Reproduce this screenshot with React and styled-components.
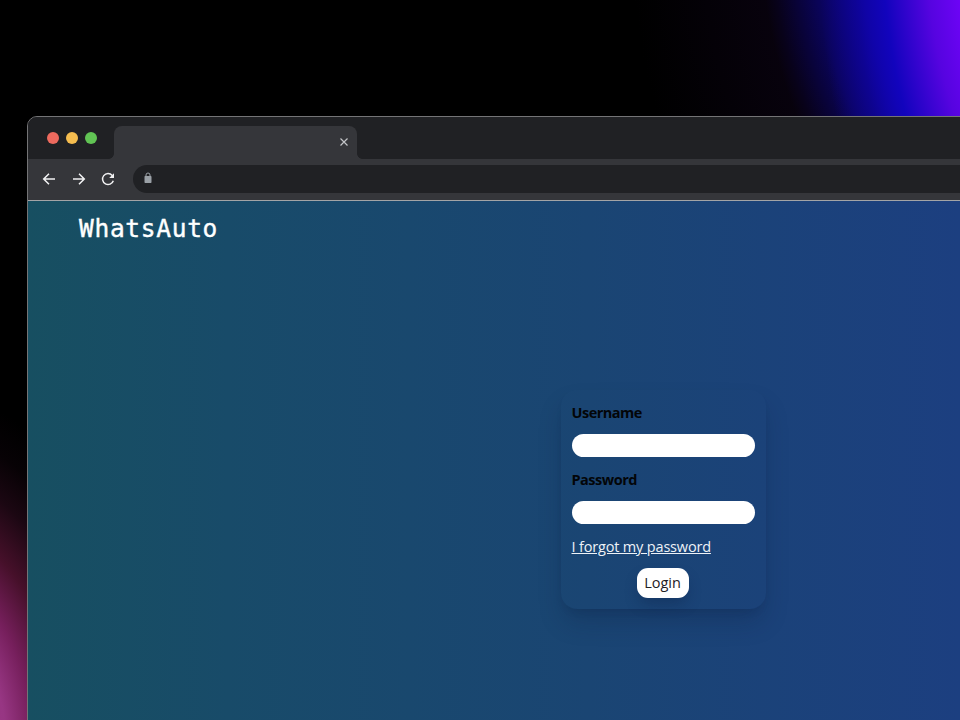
import React from 'react';
import styled, { createGlobalStyle } from 'styled-components';

const GlobalStyle = createGlobalStyle`
  * { box-sizing: border-box; }
  body { margin: 0; background: #000; overflow: hidden; }
`;

const Desktop = styled.div`
  width: 960px;
  height: 720px;
  padding: 116px 0 0 27px;
  overflow: hidden;
  background:
    radial-gradient(ellipse 200px 350px at -60px 745px, #a03a8c 0%, #973683 33%, #761f5c 46%, #46102a 61%, #1b0712 76%, #070205 88%, rgba(0, 0, 0, 0) 100%),
    radial-gradient(ellipse 360px 640px at 1130px -75px, #8a00ff 0%, #7204fa 47%, #5604e0 57%, #1204bd 69%, rgba(18, 4, 189, 0.45) 77%, rgba(18, 4, 189, 0) 87%),
    radial-gradient(ellipse 370px 440px at 1130px -75px, #0c0480 0%, #0c0480 74%, #0a0458 86%, #08021a 97%, rgba(8, 2, 14, 0.9) 100%, rgba(8, 2, 14, 0) 135%),
    #000;
`;

const Browser = styled.div`
  width: 1300px;
  height: 900px;
  display: flex;
  flex-direction: column;
  border: 1.5px solid #747476;
  border-radius: 10px;
  overflow: hidden;
  background: #202124;
`;

const TabStrip = styled.div`
  height: 42px;
  flex: none;
  display: flex;
  align-items: flex-end;
  background: #202124;
`;

const Lights = styled.div`
  display: flex;
  gap: 7px;
  width: 86px;
  padding: 0 0 15px 18.5px;
`;

const Light = styled.span`
  width: 12px;
  height: 12px;
  flex: none;
  border-radius: 50%;
  background: ${(p) => p.$color};
`;

const Tab = styled.div`
  position: relative;
  width: 243px;
  height: 33px;
  padding: 0 8.5px 2px 0;
  display: flex;
  align-items: center;
  justify-content: flex-end;
  border-radius: 8px 8px 0 0;
  background: #35363a;
  &::before,
  &::after {
    content: '';
    position: absolute;
    bottom: 0;
    width: 5px;
    height: 5px;
  }
  &::before {
    left: -5px;
    background: radial-gradient(circle at 0 0, transparent 4.5px, #35363a 5px);
  }
  &::after {
    right: -5px;
    background: radial-gradient(circle at 100% 0, transparent 4.5px, #35363a 5px);
  }
`;

const Toolbar = styled.div`
  height: 42px;
  flex: none;
  display: flex;
  align-items: center;
  padding: 0 0 1px 13px;
  background: #35363a;
  border-bottom: 1px solid #a3a4a6;
`;

const NavIcon = styled.svg`
  width: 16px;
  height: 16px;
  flex: none;
  margin-right: ${(p) => p.$gap}px;
  fill: none;
  stroke: #f1f1f2;
  stroke-width: 1.5;
`;

const CloseIcon = styled.svg`
  width: 10px;
  height: 10px;
  fill: none;
  stroke: #c3c5c8;
  stroke-width: 1.2;
`;

const AddressBar = styled.div`
  flex: 1;
  height: 28px;
  display: flex;
  align-items: center;
  padding: 0 0 2px 9.5px;
  border-radius: 14px 0 0 14px;
  background: #202124;
`;

const LockIcon = styled.svg`
  width: 10px;
  height: 12px;
`;

const Page = styled.main`
  flex: 1;
  background: linear-gradient(90deg, #174f61 0, #184b69 200px, #1a4573 560px, #1c3f80 932px);
`;

const Logo = styled.h1`
  margin: 0;
  padding: 12px 0 0 51px;
  height: 189px;
  color: #fff;
  font: 400 24.5px/32px 'DejaVu Sans Mono', monospace;
  letter-spacing: 0.7px;
  -webkit-text-stroke: 0.4px #fff;
`;

const LoginCard = styled.form`
  width: 205px;
  height: 219px;
  margin-left: 533px;
  padding: 11px 10.5px 0;
  display: flex;
  flex-direction: column;
  border-radius: 16px;
  box-shadow: 0 15px 25px -3px rgba(12, 28, 60, 0.25), 0 5px 10px -5px rgba(12, 28, 60, 0.2);
  font-family: 'Open Sans', 'Noto Sans', sans-serif;
`;

const Label = styled.label`
  height: 33px;
  line-height: 24px;
  color: #030508;
  font-size: 14.5px;
  font-weight: 700;
  letter-spacing: -0.5px;
`;

const Field = styled.input`
  width: 183px;
  height: 23px;
  margin: 0 0 11px;
  padding: 0 10px;
  border: 0;
  border-radius: 12px;
  background: #fff;
`;

const ForgotLink = styled.a`
  height: 33px;
  line-height: 23px;
  align-self: flex-start;
  color: #eef2f7;
  font-size: 14.5px;
  letter-spacing: -0.17px;
  white-space: nowrap;
  text-decoration: underline;
`;

const LoginButton = styled.button`
  width: 52px;
  height: 30px;
  flex: none;
  margin-left: 65px;
  padding: 0;
  border: 0;
  border-radius: 11px;
  background: #fff;
  color: #1f2024;
  font: 400 14.5px/30px 'Open Sans', 'Noto Sans', sans-serif;
  box-shadow: 0 8px 14px -2px rgba(12, 32, 68, 0.35);
`;

export default function App() {
  return (
    <>
      <GlobalStyle />
      <Desktop>
        <Browser>
          <TabStrip>
            <Lights>
              <Light $color="#ed6a5e" />
              <Light $color="#f5bd4f" />
              <Light $color="#61c454" />
            </Lights>
            <Tab>
              <CloseIcon viewBox="0 0 10 10">
                <path d="M1.5 1.5l7 7M8.5 1.5l-7 7" />
              </CloseIcon>
            </Tab>
          </TabStrip>
          <Toolbar>
            <NavIcon viewBox="0 0 16 16" $gap={14}>
              <path d="M14 8H2.8M8 2.7L2.7 8 8 13.3" />
            </NavIcon>
            <NavIcon viewBox="0 0 16 16" $gap={13}>
              <path d="M2 8h11.2M8 2.7L13.3 8 8 13.3" />
            </NavIcon>
            <NavIcon viewBox="0 0 16 16" $gap={17}>
              <path d="M13.3 9.7A5.5 5.5 0 1 1 12.2 4.4" />
              <path d="M14 2.2V7H9.2z" fill="#f1f1f2" stroke="none" />
            </NavIcon>
            <AddressBar>
              <LockIcon viewBox="0 0 10 12">
                <rect x="1.5" y="4" width="7" height="7" rx="0.7" fill="#9aa0a6" />
                <path d="M3 4.5V3a2 2 0 0 1 4 0v1.5" fill="none" stroke="#9aa0a6" />
              </LockIcon>
            </AddressBar>
          </Toolbar>
          <Page>
            <Logo>WhatsAuto</Logo>
            <LoginCard>
              <Label htmlFor="username">Username</Label>
              <Field id="username" />
              <Label htmlFor="password">Password</Label>
              <Field id="password" type="password" />
              <ForgotLink>I forgot my password</ForgotLink>
              <LoginButton type="button">Login</LoginButton>
            </LoginCard>
          </Page>
        </Browser>
      </Desktop>
    </>
  );
}
